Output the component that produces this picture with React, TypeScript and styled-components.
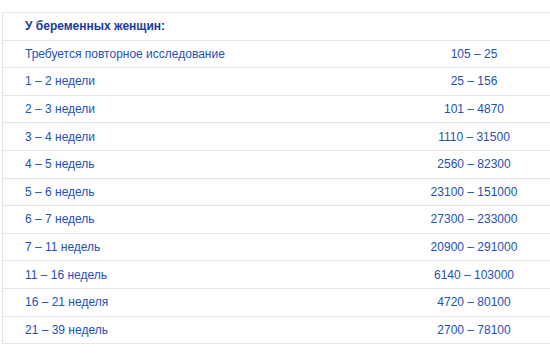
import styled, { createGlobalStyle } from "styled-components";

const GlobalStyle = createGlobalStyle`
  body {
    margin: 0;
    background: #ffffff;
    font-family: "Liberation Sans", Arial, sans-serif;
  }
`;

const Page = styled.div`
  padding: 12px 0 0 2px;
  width: 550px;
  height: 354px;
  box-sizing: border-box;
  overflow: hidden;
`;

const Table = styled.div`
  width: 560px;
  border-top: 1px solid #e4e4e4;
  border-left: 1px solid #e4e4e4;
`;

const Row = styled.div`
  display: grid;
  grid-template-columns: 395px 152px 1fr;
  align-items: center;
  height: 27.6px;
  box-sizing: border-box;
  border-bottom: 1px solid #e4e4e4;
`;

const Label = styled.div<{ $head?: boolean }>`
  padding-left: 22px;
  font-size: 12px;
  font-weight: ${(p) => (p.$head ? 700 : 400)};
  color: ${(p) => (p.$head ? "#1b3a98" : "#2450b8")};
  white-space: nowrap;
`;

const Value = styled.div`
  text-align: center;
  font-size: 12px;
  color: #2450b8;
  white-space: nowrap;
`;

const rows: [string, string][] = [
  ["Требуется повторное исследование", "105 – 25"],
  ["1 – 2 недели", "25 – 156"],
  ["2 – 3 недели", "101 – 4870"],
  ["3 – 4 недели", "1110 – 31500"],
  ["4 – 5 недель", "2560 – 82300"],
  ["5 – 6 недель", "23100 – 151000"],
  ["6 – 7 недель", "27300 – 233000"],
  ["7 – 11 недель", "20900 – 291000"],
  ["11 – 16 недель", "6140 – 103000"],
  ["16 – 21 неделя", "4720 – 80100"],
  ["21 – 39 недель", "2700 – 78100"],
];

export default function App() {
  return (
    <>
      <GlobalStyle />
      <Page>
        <Table>
          <Row>
            <Label $head>У беременных женщин:</Label>
            <Value />
          </Row>
          {rows.map(([label, value]) => (
            <Row key={label}>
              <Label>{label}</Label>
              <Value>{value}</Value>
            </Row>
          ))}
        </Table>
      </Page>
    </>
  );
}
